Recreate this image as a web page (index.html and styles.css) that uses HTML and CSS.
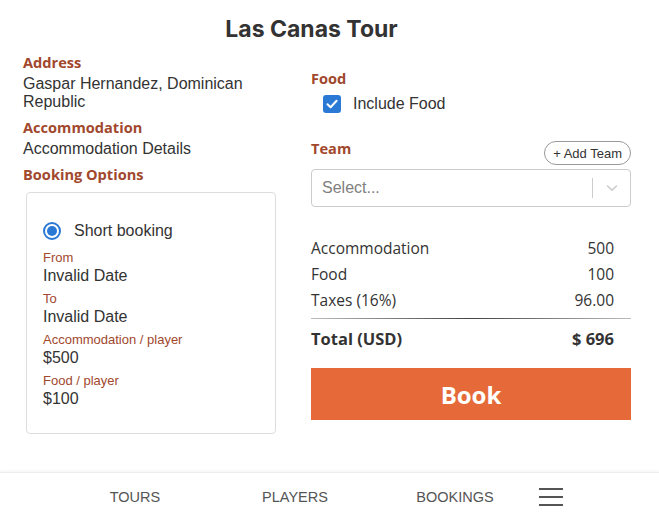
FILE: index.html
```html
<!DOCTYPE html>
<html lang="en">
<head>
<meta charset="utf-8">
<title>Las Canas Tour</title>
<link rel="stylesheet" href="styles.css">
</head>
<body>
<div class="page">
  <main class="main">
    <h1 class="title">Las Canas Tour</h1>
    <div class="columns">
      <section class="left">
        <div class="label">Address</div>
        <div class="value">Gaspar Hernandez, Dominican Republic</div>
        <div class="label gap">Accommodation</div>
        <div class="value">Accommodation Details</div>
        <div class="label gap">Booking Options</div>
        <div class="card">
          <div class="radio-row">
            <span class="radio"><span class="dot"></span></span>
            <span class="radio-text">Short booking</span>
          </div>
          <div class="small-label first">From</div>
          <div class="small-value">Invalid Date</div>
          <div class="small-label">To</div>
          <div class="small-value">Invalid Date</div>
          <div class="small-label">Accommodation / player</div>
          <div class="small-value">$500</div>
          <div class="small-label">Food / player</div>
          <div class="small-value">$100</div>
        </div>
      </section>
      <section class="right">
        <div class="label">Food</div>
        <div class="check-row">
          <span class="checkbox">
            <svg width="18" height="18" viewBox="0 0 18 18"><path d="M4.5 9.3 L7.6 12.3 L13.6 5.8" fill="none" stroke="#fff" stroke-width="2" stroke-linecap="round" stroke-linejoin="round"/></svg>
          </span>
          <span class="check-text">Include Food</span>
        </div>
        <div class="team-head">
          <div class="label">Team</div>
          <button class="add-team">+ Add Team</button>
        </div>
        <div class="select">
          <span class="placeholder">Select...</span>
          <span class="sep"></span>
          <span class="chev">
            <svg width="14" height="14" viewBox="0 0 14 14"><path d="M2.5 5 L7 9.2 L11.5 5" fill="none" stroke="#ccc" stroke-width="1.6" stroke-linecap="round" stroke-linejoin="round"/></svg>
          </span>
        </div>
        <div class="summary">
          <div class="row"><span>Accommodation</span><span>500</span></div>
          <div class="row"><span>Food</span><span>100</span></div>
          <div class="row"><span>Taxes (16%)</span><span>96.00</span></div>
          <hr class="rule">
          <div class="row total"><span>Total (USD)</span><span>$ 696</span></div>
        </div>
        <button class="book">Book</button>
      </section>
    </div>
  </main>
  <footer class="footer">
    <nav class="nav">
      <a class="nav-item">TOURS</a>
      <a class="nav-item">PLAYERS</a>
      <a class="nav-item">BOOKINGS</a>
      <span class="burger"><span></span><span></span><span></span></span>
    </nav>
  </footer>
</div>
</body>
</html>
```

FILE: styles.css
```css
* { box-sizing: border-box; }
html, body { margin: 0; padding: 0; }
body {
  background: #fff;
  color: #333;
  font-family: "Liberation Sans", Arial, sans-serif;
}
.page {
  min-height: 100vh;
  display: flex;
  flex-direction: column;
}
.main {
  flex: 1;
}
.title {
  margin: 0;
  padding: 15px 36px 0 0;
  text-align: center;
  font-family: Inter, "Liberation Sans", sans-serif;
  font-weight: 700;
  font-size: 23px;
  line-height: 28px;
  color: #333;
}
.columns {
  display: flex;
  padding: 10px 28px 0 23px;
  gap: 35px;
}
.left {
  width: 253px;
  flex: none;
}
.right {
  flex: 1;
  padding-top: 16px;
}
.label {
  font-family: "Open Sans", sans-serif;
  font-weight: 700;
  font-size: 14.6px;
  line-height: 18px;
  color: #a1482d;
}
.label.gap { margin-top: 7px; }
.value {
  font-size: 16px;
  line-height: 18px;
  color: #333;
  margin-top: 4px;
}
.card {
  margin: 9px 0 0 3px;
  border: 1px solid #ddd;
  border-radius: 4px;
  padding: 28px 16px 25px 16px;
}
.radio-row {
  display: flex;
  align-items: center;
  gap: 13px;
  margin-bottom: 9px;
}
.radio {
  width: 18px;
  height: 18px;
  border: 2px solid #2a7ad5;
  border-radius: 50%;
  display: flex;
  align-items: center;
  justify-content: center;
}
.dot {
  width: 10px;
  height: 10px;
  border-radius: 50%;
  background: #2a7ad5;
}
.radio-text {
  font-size: 16px;
  line-height: 20px;
}
.small-label {
  font-size: 13px;
  line-height: 15px;
  color: #a1482d;
  margin-top: 6px;
}
.small-label.first { margin-top: 0; }
.small-value {
  font-size: 16px;
  line-height: 18px;
  color: #333;
  margin-top: 2px;
}
.check-row {
  display: flex;
  align-items: center;
  gap: 12px;
  padding: 7px 0 0 12px;
}
.checkbox {
  width: 18px;
  height: 18px;
  border-radius: 3px;
  background: #2a7ad5;
  display: flex;
}
.check-text {
  font-size: 16px;
  line-height: 20px;
}
.team-head {
  display: flex;
  justify-content: space-between;
  align-items: flex-end;
  margin-top: 25px;
}
.team-head .label { margin-bottom: 12px; }
.add-team {
  font-family: "Liberation Sans", sans-serif;
  font-size: 13px;
  color: #333;
  background: #fff;
  border: 1px solid #999;
  border-radius: 12px;
  height: 24px;
  padding: 0 8px;
  margin-bottom: 4px;
}
.select {
  display: flex;
  align-items: center;
  height: 38px;
  border: 1px solid #ccc;
  border-radius: 4px;
  padding-left: 10px;
}
.placeholder {
  flex: 1;
  font-size: 16px;
  color: #808080;
}
.sep {
  width: 1px;
  height: 20px;
  background: #ccc;
}
.chev {
  width: 37px;
  display: flex;
  justify-content: center;
}
.summary {
  margin-top: 28px;
  font-family: "Open Sans", sans-serif;
  font-size: 15.5px;
  color: #333;
}
.row {
  display: flex;
  justify-content: space-between;
  line-height: 26px;
  padding-right: 17px;
}
.rule {
  margin: 5px 0 7px 0;
  border: 0;
  height: 1px;
  background: linear-gradient(to right, #bbb, #444 50%, #bbb);
}
.row.total {
  font-weight: 700;
  font-size: 16.5px;
}
.book {
  display: block;
  width: 100%;
  margin-top: 16px;
  height: 52px;
  border: 0;
  background: #e66a39;
  color: #fff;
  font-family: "Open Sans", sans-serif;
  font-weight: 700;
  font-size: 24px;
}
.footer {
  height: 49px;
  border-top: 1px solid #eee;
  box-shadow: 0 -1px 3px rgba(0,0,0,0.05);
  display: flex;
  align-items: center;
}
.nav {
  display: flex;
  align-items: center;
  padding-left: 55px;
}
.nav-item {
  width: 160px;
  text-align: center;
  font-size: 14.5px;
  color: #555;
}
.burger {
  margin-left: 4px;
  width: 24px;
  display: flex;
  flex-direction: column;
  gap: 6px;
}
.burger span {
  height: 2px;
  background: #555;
}
```
